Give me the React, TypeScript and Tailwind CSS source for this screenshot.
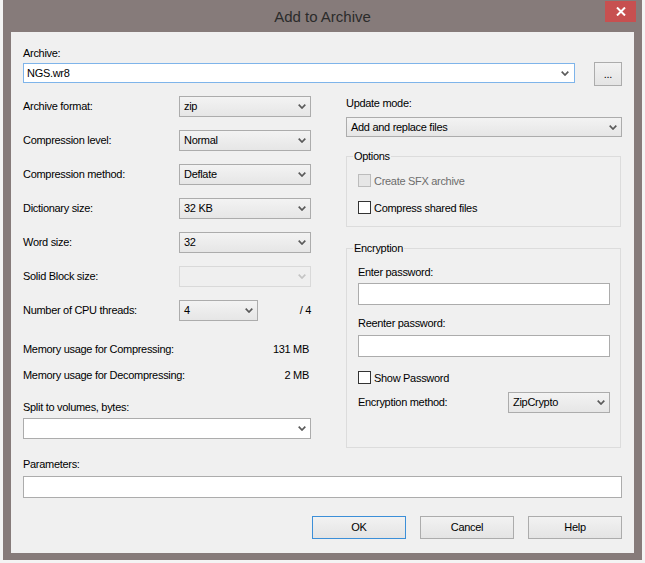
import React from "react";

const FONT = { fontFamily: '"Liberation Sans", Arial, sans-serif' };

function Arrow({ disabled }: { disabled?: boolean }) {
  return (
    <svg width="8" height="5" viewBox="0 0 8 5" className="shrink-0">
      <path
        d="M0.7 0.7 L4 4 L7.3 0.7"
        fill="none"
        stroke={disabled ? "#c4c4c4" : "#5a5a5a"}
        strokeWidth="1.7"
      />
    </svg>
  );
}

function Combo({
  value,
  cls,
  disabled,
}: {
  value?: string;
  cls: string;
  disabled?: boolean;
}) {
  return (
    <div
      className={
        "flex items-center justify-between border pl-[4px] pr-[4px] " +
        (disabled
          ? "border-[#d9d9d9] bg-[#efefef] "
          : "border-[#acacac] bg-linear-to-b from-[#f3f3f3] to-[#e6e6e6] ") +
        cls
      }
    >
      <span>{value}</span>
      <Arrow disabled={disabled} />
    </div>
  );
}

function Check({ label, disabled }: { label: string; disabled?: boolean }) {
  return (
    <div className="flex h-[13px] items-center">
      <div
        className={
          "h-[13px] w-[13px] border " +
          (disabled ? "border-[#bcbcbc] bg-[#e6e6e6]" : "border-[#333333] bg-white")
        }
      />
      <span className={"ml-[3px] leading-[14px] " + (disabled ? "text-[#6d6d6d]" : "text-black")}>
        {label}
      </span>
    </div>
  );
}

function Btn({ label, cls }: { label: string; cls: string }) {
  return (
    <div
      className={
        "flex items-center justify-center border bg-linear-to-b from-[#f2f2f2] to-[#e4e4e4] " + cls
      }
    >
      {label}
    </div>
  );
}

function Row({ label, children }: { label: string; children: React.ReactNode }) {
  return (
    <div className="flex h-[21px] items-center">
      <div className="w-[156px] shrink-0">{label}</div>
      {children}
    </div>
  );
}

export default function App() {
  return (
    <div
      className="h-[563px] w-[645px] overflow-hidden bg-[#f4f4f4] pl-[3px] text-[11px] tracking-[-0.3px] text-black"
      style={FONT}
    >
      <div className="flex h-[560px] w-[639px] flex-col bg-[#867b7a] px-[8px] pb-[7px]">
        {/* title bar */}
        <div className="relative flex h-[32px] shrink-0 items-center justify-center">
          <span className="mt-[2px] text-[15px] tracking-normal text-[#2b2b2b]">Add to Archive</span>
          <div className="absolute right-[-2px] top-[1px] flex h-[21px] w-[31px] items-center justify-center bg-[#c75050]">
            <svg width="10" height="9" viewBox="0 0 10 9">
              <path d="M1 0.5 L9 8.5 M9 0.5 L1 8.5" stroke="white" strokeWidth="2" />
            </svg>
          </div>
        </div>

        {/* client */}
        <div className="flex flex-1 flex-col bg-[#f0f0f0] px-[12px] pt-[14px]">
          <div className="h-[14px] leading-[14px]">Archive:</div>
          <div className="mt-[3px] flex items-start">
            <div className="flex h-[20px] w-[552px] items-center justify-between border border-[#7eb4ea] bg-white pl-[3px] pr-[5px]">
              <span>NGS.wr8</span>
              <Arrow />
            </div>
            <Btn label="..." cls="ml-[19px] mt-[-1px] h-[24px] w-[28px] border-[#acacac]" />
          </div>

          <div className="mt-[10px] flex items-start">
            {/* left column */}
            <div className="flex w-[289px] flex-col">
              <div className="flex flex-col gap-[13px]">
                <Row label="Archive format:">
                  <Combo value="zip" cls="h-[21px] w-[132px]" />
                </Row>
                <Row label="Compression level:">
                  <Combo value="Normal" cls="h-[21px] w-[132px]" />
                </Row>
                <Row label="Compression method:">
                  <Combo value="Deflate" cls="h-[21px] w-[132px]" />
                </Row>
                <Row label="Dictionary size:">
                  <Combo value="32 KB" cls="h-[21px] w-[132px]" />
                </Row>
                <Row label="Word size:">
                  <Combo value="32" cls="h-[21px] w-[132px]" />
                </Row>
                <Row label="Solid Block size:">
                  <Combo cls="h-[21px] w-[132px]" disabled />
                </Row>
                <Row label="Number of CPU threads:">
                  <Combo value="4" cls="h-[21px] w-[79px]" />
                  <div className="flex-1 text-right">/ 4</div>
                </Row>
              </div>
              <div className="mt-[21px] flex h-[14px] items-center justify-between pr-[2px] leading-[14px]">
                <span>Memory usage for Compressing:</span>
                <span>131 MB</span>
              </div>
              <div className="mt-[12px] flex h-[14px] items-center justify-between pr-[2px] leading-[14px]">
                <span>Memory usage for Decompressing:</span>
                <span>2 MB</span>
              </div>
              <div className="mt-[18px] h-[14px] leading-[14px]">Split to volumes, bytes:</div>
              <div className="mt-[4px] flex h-[21px] w-[288px] items-center justify-end border border-[#acacac] bg-white pr-[4px]">
                <Arrow />
              </div>
            </div>

            {/* right column */}
            <div className="ml-[35px] flex w-[276px] flex-col">
              <div className="h-[14px] leading-[14px]">Update mode:</div>
              <Combo value="Add and replace files" cls="mt-[7px] h-[20px] w-[276px] pl-[3px]" />

              <div className="relative mt-[19px] h-[71px] w-[275px] border border-[#dcdcdc] pl-[11px] pt-[17px]">
                <span className="absolute left-[6px] top-[-8px] bg-[#f0f0f0] px-[1px] leading-[14px]">
                  Options
                </span>
                <Check label="Create SFX archive" disabled />
                <div className="mt-[14px]">
                  <Check label="Compress shared files" />
                </div>
              </div>

              <div className="relative mt-[21px] h-[200px] w-[275px] border border-[#dcdcdc] pl-[11px] pt-[16px]">
                <span className="absolute left-[6px] top-[-8px] bg-[#f0f0f0] px-[1px] leading-[14px]">
                  Encryption
                </span>
                <div className="h-[14px] leading-[14px]">Enter password:</div>
                <div className="mt-[4px] h-[22px] w-[252px] border border-[#acacac] bg-white" />
                <div className="mt-[11px] h-[14px] leading-[14px]">Reenter password:</div>
                <div className="mt-[5px] h-[22px] w-[252px] border border-[#acacac] bg-white" />
                <div className="mt-[14px]">
                  <Check label="Show Password" />
                </div>
                <div className="mt-[8px] flex h-[21px] items-center">
                  <div className="w-[150px]">Encryption method:</div>
                  <Combo value="ZipCrypto" cls="h-[21px] w-[102px]" />
                </div>
              </div>
            </div>
          </div>

          <div className="mt-[9px] h-[14px] leading-[14px]">Parameters:</div>
          <div className="mt-[5px] h-[22px] w-[599px] border border-[#acacac] bg-white" />

          <div className="mt-[18px] flex justify-end gap-[14px] pr-[0px]">
            <Btn label="OK" cls="h-[23px] w-[94px] border-[#3c8fd8]" />
            <Btn label="Cancel" cls="h-[23px] w-[94px] border-[#acacac]" />
            <Btn label="Help" cls="h-[23px] w-[94px] border-[#acacac]" />
          </div>
        </div>
      </div>
    </div>
  );
}
